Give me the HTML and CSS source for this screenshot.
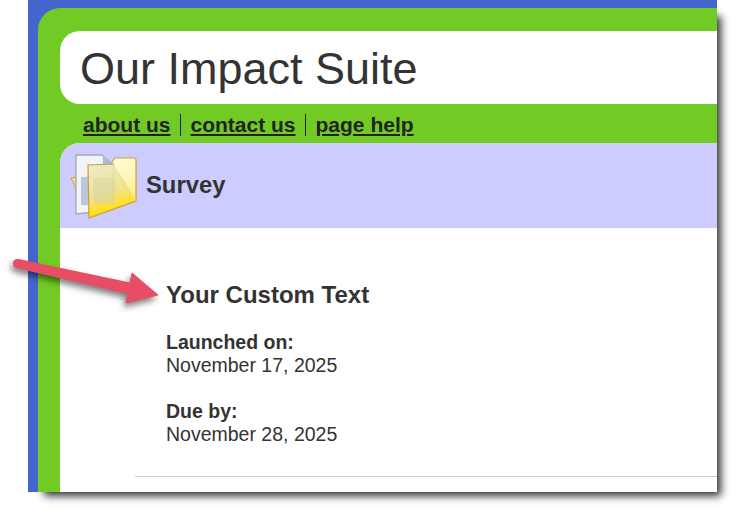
FILE: index.html
```html
<!DOCTYPE html>
<html>
<head>
  <title>Our Impact Suite</title>
  <link rel="stylesheet" href="styles.css">
</head>
<body>
  <div class="shot">
    <div class="frame">
      <div class="title-bar">
        <h1>Our Impact Suite</h1>
      </div>
      <div class="nav">
        <a href="#">about us</a>
        <a href="#">contact us</a>
        <a href="#">page help</a>
      </div>
      <div class="page">
        <div class="page-head">
          <svg class="folder" width="70" height="70" viewBox="0 0 70 70">
            <defs>
              <linearGradient id="back" x1="0" y1="0" x2="0.4" y2="1">
                <stop offset="0" stop-color="#fffee8"/>
                <stop offset="0.6" stop-color="#fff6b4"/>
                <stop offset="1" stop-color="#ffe86a"/>
              </linearGradient>
              <linearGradient id="front" x1="0.1" y1="0" x2="0.35" y2="1">
                <stop offset="0" stop-color="#efe8c0" stop-opacity="0.85"/>
                <stop offset="0.55" stop-color="#ece28c" stop-opacity="0.9"/>
                <stop offset="0.82" stop-color="#ffe030"/>
                <stop offset="1" stop-color="#ffd400"/>
              </linearGradient>
            </defs>
            <path d="M1 27 L6 26 L7 40 Z" fill="#f3dc8c" stroke="#c8a040"/>
            <path d="M40 14 L45 7 L64 7 Q66 7 66 9 L66 50 L20 66 L20 14 Z" fill="url(#back)" stroke="#c8a040" stroke-width="1.2"/>
            <path d="M6 4 L32 4 L44 15 L42 59 L6 63 Z" fill="#f3f4f8" stroke="#a4a8b0" stroke-width="1.3"/>
            <path d="M33 4 L44 14 L33 14 Z" fill="#a9bcdc"/>
            <rect x="11" y="26" width="7" height="28" fill="#bcc5de"/>
            <path d="M18 14 L44 13 L48 21 L66 50 L19 67 Z" fill="url(#front)"/>
            <path d="M48 21 L66 50" stroke="#f0dc90" stroke-width="1" fill="none"/>
            <path d="M44 13 L18 14 L19 67 L66 50" stroke="#c8a030" stroke-width="1.2" fill="none"/>
            <rect x="23" y="27" width="22" height="26" fill="#d4d4a8" opacity="0.5"/>
          </svg>
          <h2>Survey</h2>
        </div>
        <div class="content">
          <h3>Your Custom Text</h3>
          <p class="date"><b>Launched on:</b><br>November 17, 2025</p>
          <p class="date"><b>Due by:</b><br>November 28, 2025</p>
          <hr class="rule">
        </div>
      </div>
    </div>
  </div>

  <svg class="arrow" width="170" height="70" viewBox="0 0 170 70">
    <circle cx="17.5" cy="9.5" r="4.6" fill="#e84d66"/>
    <path d="M18.5 5 L130 28.5 L127 40 L16.5 14 Z" fill="#e84d66"/>
    <path d="M132 19 L158 41 L126 49 Z" fill="#e84d66" stroke="#e84d66" stroke-linejoin="round"/>
  </svg>
</body>
</html>
```

FILE: styles.css
```css
html, body {
  margin: 0;
  padding: 0;
  background-color: white;
}
body {
  position: relative;
  width: 740px;
  height: 515px;
  overflow: hidden;
  font-family: "Liberation Sans", Arial, sans-serif;
  color: #333;
}
.shot {
  margin-left: 28px;
  width: 679px;
  height: 484px;
  padding: 8px 0 0 10px;
  background-color: #4466cc;
  box-shadow: 10px 10px 8px -6px rgba(0,0,0,0.8);
}
.frame {
  height: 461px;
  padding: 23px 0 0 22px;
  background-color: #72cb25;
  border-top-left-radius: 22px;
}
.title-bar {
  display: flex;
  align-items: center;
  height: 71px;
  padding: 2px 0 0 20px;
  background-color: white;
  border-radius: 20px 0 0 20px;
}
h1 {
  margin: 0;
  font-size: 45px;
  font-weight: normal;
}
.nav {
  display: flex;
  align-items: center;
  height: 39px;
  padding: 2px 0 0 23px;
  box-sizing: border-box;
}
.nav a {
  color: #222;
  font-size: 21px;
  font-weight: bold;
  line-height: 22px;
  padding-right: 9px;
  margin-right: 10px;
  border-right: 1px solid #222;
}
.nav a:last-child {
  border-right: none;
}
.page {
  height: 349px;
  background-color: white;
  border-top-left-radius: 20px;
  overflow: hidden;
}
.page-head {
  display: flex;
  align-items: center;
  height: 83px;
  padding: 0 0 2px 10px;
  background-color: #ccccff;
}
.folder {
  flex: none;
  margin: 2px 6px 0 0;
}
h2 {
  margin: 0;
  font-size: 23.8px;
  font-weight: bold;
}
.content {
  padding: 53px 0 0 75px;
}
h3 {
  margin: 0 0 22px 31px;
  font-size: 24px;
  line-height: 28px;
}
.date {
  margin: 0 0 23px 31px;
  font-size: 19.5px;
  line-height: 23px;
}
.rule {
  margin: 30px 0 0;
  border: none;
  border-top: 1px solid #ccc;
}
.arrow {
  position: absolute;
  left: 0;
  top: 254px;
  filter: drop-shadow(-2px 4px 3px rgba(0,0,0,0.5));
}
```
